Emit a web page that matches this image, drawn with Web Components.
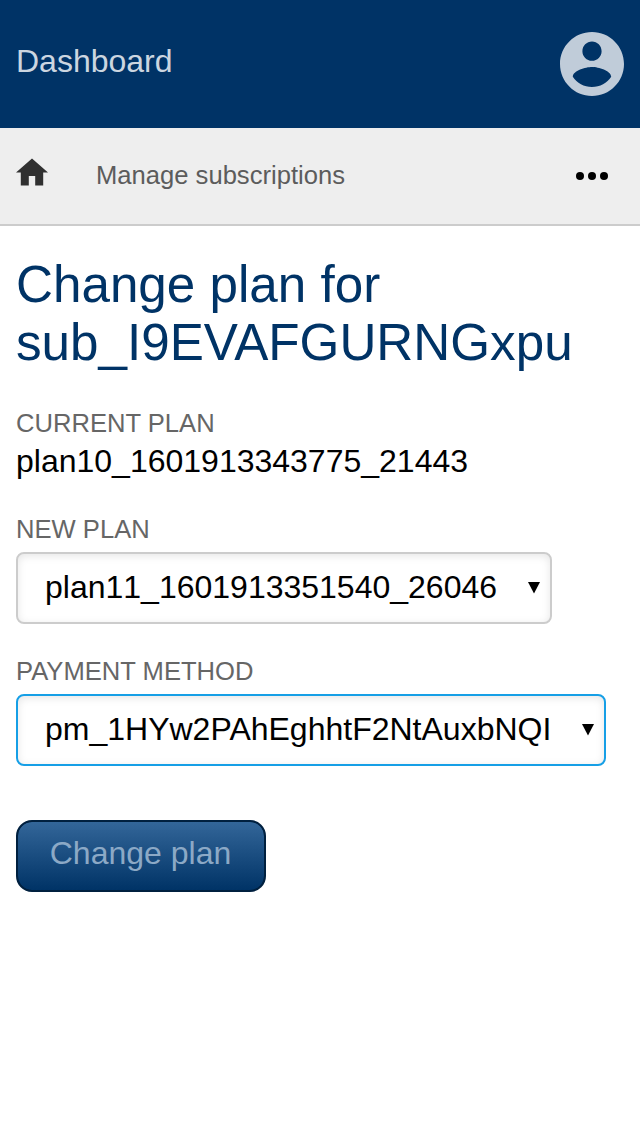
<!DOCTYPE html>
<html lang="en">
<head>
<meta charset="utf-8">
<title>Change plan</title>
<style>
html,body{margin:0;background:#fff}
body{font:32px/36px "Liberation Sans",Arial,sans-serif;color:#000;min-height:1136px}
</style>
</head>
<body>
<app-header>Dashboard</app-header>
<nav-bar>Manage subscriptions</nav-bar>
<plan-form>
  <span slot="title">Change plan for sub_I9EVAFGURNGxpu</span>
  <form-field label="Current plan">plan10_1601913343775_21443</form-field>
  <form-field label="New plan" style="--gap:8px;--space:36px"><select-box style="--width:536px;--kern:none">plan11_1601913351540_26046</select-box></form-field>
  <form-field label="Payment method" style="--gap:8px;--space:33px"><select-box style="--width:590px;--line:#169fe6">pm_1HYw2PAhEghhtF2NtAuxbNQI</select-box></form-field>
  <submit-button>Change plan</submit-button>
</plan-form>
<script>
const component = (name, html) => customElements.define(name, class extends HTMLElement {
  constructor() {
    super();
    this.attachShadow({ mode: 'open' }).innerHTML = html;
  }
  connectedCallback() {
    const label = this.shadowRoot.querySelector('.label');
    if (label) label.textContent = this.getAttribute('label');
  }
});

component('app-header', `
<style>
:host{display:flex;justify-content:space-between;align-items:flex-start;box-sizing:border-box;height:128px;padding:32px 16px;background:#003366;color:#ccd6e0}
.name{padding-top:11px}
svg{display:block;width:64px;height:64px;fill:#c0ccd9}
</style>
<span class="name"><slot></slot></span>
<svg viewBox="2 2 20 20"><path d="M12 2C6.48 2 2 6.48 2 12s4.48 10 10 10 10-4.48 10-10S17.52 2 12 2zm0 3c1.66 0 3 1.34 3 3s-1.34 3-3 3-3-1.34-3-3 1.34-3 3-3zm0 14.2c-2.5 0-4.71-1.28-6-3.22.03-1.99 4-3.08 6-3.08 1.99 0 5.97 1.09 6 3.08-1.29 1.94-3.5 3.22-6 3.22z"/></svg>`);

component('nav-bar', `
<style>
:host{display:flex;align-items:flex-start;box-sizing:border-box;height:98px;padding:0 32px 0 16px;background:#eee;border-bottom:2px solid #ccc;color:#5c5c5c;font-size:25.6px;line-height:29px}
svg{display:block;flex:none}
.home{width:32px;height:28px;margin:30px 48px 0 0;fill:#303030}
.text{flex:1;padding-top:33px}
.more{width:32px;height:8px;margin-top:44px}
</style>
<svg class="home" viewBox="0 0 32 28"><path d="M12.8 27.6v-9.6h6.4v9.6h8v-13.2h4.8L16 .4 0 14.4h4.8v13.2z"/></svg>
<span class="text"><slot></slot></span>
<svg class="more" viewBox="0 0 32 8"><circle cx="4" cy="4" r="4"/><circle cx="16" cy="4" r="4"/><circle cx="28" cy="4" r="4"/></svg>`);

component('plan-form', `
<style>
:host{display:block;padding:30px 16px 0}
h1{margin:0 0 37px;font-size:51.2px;line-height:58px;font-weight:400;color:#003366}
</style>
<h1><slot name="title"></slot></h1>
<slot></slot>`);

component('form-field', `
<style>
:host{display:flex;flex-direction:column;align-items:flex-start;gap:var(--gap,5px);margin-top:var(--space,0)}
.label{font-size:25.6px;line-height:29px;text-transform:uppercase;color:#666}
</style>
<span class="label"></span>
<div><slot></slot></div>`);

component('select-box', `
<style>
:host{display:flex;justify-content:space-between;align-items:flex-start;box-sizing:border-box;width:var(--width);height:72px;padding:15px 10px 0 27px;border:2px solid var(--line,#ccc);border-radius:8px;background:#fff;box-shadow:inset 0 2px 8px rgba(0,0,0,.1);font-kerning:var(--kern,auto)}
svg{display:block;width:12px;height:12px;margin-top:13px}
</style>
<span><slot></slot></span>
<svg viewBox="0 0 12 12"><path d="M0 0h12L6 11.6z"/></svg>`);

component('submit-button', `
<style>
:host{display:block;box-sizing:border-box;width:250px;height:72px;margin-top:54px;padding:13px 1px 0 0;border:2px solid #00203f;border-radius:16px;background:linear-gradient(#336699,#003366) padding-box,#00203f border-box;color:#8ca9c6;text-align:center}
</style>
<slot></slot>`);
</script>
</body>
</html>
